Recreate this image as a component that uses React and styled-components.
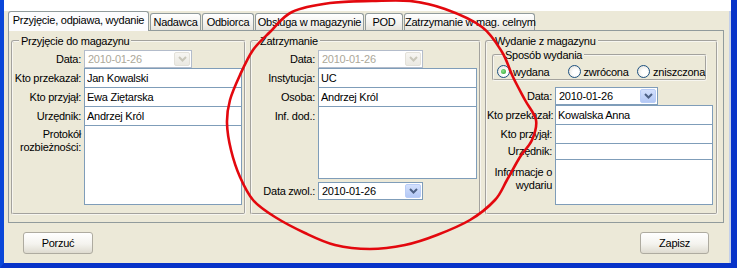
import React from 'react';
import styled, { createGlobalStyle } from 'styled-components';

const GlobalStyle = createGlobalStyle`
  html, body {
    margin: 0;
    padding: 0;
    background: #fff;
  }
  * {
    box-sizing: border-box;
  }
`;

const Window = styled.div`
  position: relative;
  width: 737px;
  height: 268px;
  display: flex;
  flex-direction: column;
  background: #ece9d8;
  border-left: 4px solid #0a47d9;
  border-right: 6px solid #0733c8;
  border-bottom: 5px solid #0733c8;
  box-shadow: inset -2px 0 0 #c3cfe9;
  font-family: 'Liberation Sans', Arial, sans-serif;
  font-size: 11px;
  letter-spacing: -0.25px;
  color: #000;
  overflow: hidden;
`;

const TopStrip = styled.div`
  height: 11px;
  background: #fff;
  flex: none;
`;

const TabRow = styled.div`
  height: 19px;
  display: flex;
  align-items: flex-end;
  gap: 1px;
  padding-left: 4px;
  flex: none;
`;

const Tab = styled.div`
  position: relative;
  z-index: ${(p) => (p.$active ? 2 : 0)};
  width: ${(p) => p.$w}px;
  height: ${(p) => (p.$active ? 20 : 17)}px;
  margin-bottom: ${(p) => (p.$active ? -1 : 0)}px;
  border: 1px solid #919b9c;
  border-bottom: none;
  border-radius: 3px 3px 0 0;
  background: ${(p) =>
    p.$active ? '#fcfcfe' : 'linear-gradient(#ffffff, #f3f2ee 60%, #e6e4dc)'};
  text-align: center;
  line-height: ${(p) => (p.$active ? 17 : 17)}px;
  white-space: nowrap;
`;

const Panel = styled.div`
  margin-left: 4px;
  width: 716px;
  height: 193px;
  flex: none;
  display: flex;
  gap: 4px;
  padding: 3px 5px 7px 2px;
  border: 1px solid #919b9c;
  background: #ece9d8;
`;

const Group = styled.fieldset`
  width: ${(p) => p.$w}px;
  min-width: 0;
  margin: 0;
  padding: 2px ${(p) => p.$pr}px 0 0;
  border: 2px groove #f7f6f0;
  border-radius: 3px;
`;

const SubGroup = styled(Group)`
  width: auto;
  margin: -2px 6px 0 5px;
  padding: 2px 0 0 3px;
`;

const Legend = styled.legend`
  margin-left: 6px;
  padding: 0 2px;
  line-height: 14px;
`;

const Row = styled.div`
  display: grid;
  grid-template-columns: ${(p) => p.$lw}px ${(p) => p.$fw}px;
  height: ${(p) => p.$h}px;
  margin-top: ${(p) => p.$mt ?? -1}px;
`;

const Label = styled.div`
  text-align: right;
  padding-right: 3px;
  line-height: 13px;
  white-space: nowrap;
  align-self: ${(p) => (p.$pt != null ? 'start' : 'center')};
  padding-top: ${(p) => p.$pt ?? 0}px;
`;

const TextBox = styled.input`
  width: 100%;
  height: 100%;
  margin: 0;
  padding: 0 2px;
  border: 1px solid #7f9db9;
  background: #fff;
  font: inherit;
  letter-spacing: inherit;
  color: #000;
  outline: none;
`;

const TextArea = styled.textarea`
  width: 100%;
  height: 100%;
  margin: 0;
  padding: 2px;
  border: 1px solid #7f9db9;
  background: #fff;
  font: inherit;
  letter-spacing: inherit;
  resize: none;
  outline: none;
  overflow: hidden;
`;

const Combo = styled.div`
  width: ${(p) => p.$w}px;
  height: 18px;
  display: flex;
  align-items: center;
  justify-content: space-between;
  padding: 0 1px 0 3px;
  border: 1px solid ${(p) => (p.$disabled ? '#b3bccb' : '#7f9db9')};
  background: #fff;
  color: ${(p) => (p.$disabled ? '#aca899' : '#000')};
`;

const DropButton = styled.div`
  width: 16px;
  height: 14px;
  display: flex;
  align-items: center;
  justify-content: center;
  border-radius: 2px;
  border: 1px solid ${(p) => (p.$disabled ? '#e3e1d9' : '#b9cdf7')};
  background: ${(p) =>
    p.$disabled
      ? 'linear-gradient(#f7f6f2, #ebe9e2)'
      : 'linear-gradient(#d3e0fd, #b3c8f5)'};
  color: ${(p) => (p.$disabled ? '#c9c7ba' : '#4d6185')};
`;

const RadioRow = styled.div`
  height: 15px;
  display: flex;
  align-items: center;
`;

const RadioItem = styled.label`
  width: ${(p) => (p.$w ? `${p.$w}px` : 'auto')};
  display: flex;
  align-items: center;
  gap: 3px;
`;

const RadioDot = styled.span`
  position: relative;
  width: 13px;
  height: 13px;
  border-radius: 50%;
  border: 1px solid #1c5180;
  background: radial-gradient(circle at 60% 60%, #ffffff 30%, #dcd9d0);
  &::after {
    content: '';
    display: ${(p) => (p.$checked ? 'block' : 'none')};
    position: absolute;
    left: 3px;
    top: 3px;
    width: 5px;
    height: 5px;
    border-radius: 50%;
    background: radial-gradient(circle at 40% 40%, #8fe28f, #21a121);
  }
`;

const Footer = styled.div`
  flex: 1;
  display: flex;
  justify-content: space-between;
  align-items: flex-start;
  padding: 9px 22px 0 19px;
`;

const Button = styled.button`
  width: ${(p) => p.$w}px;
  height: 22px;
  margin: 0;
  padding: 0;
  border: 1px solid #aeaba0;
  border-radius: 3px;
  background: linear-gradient(#ffffff, #f4f3ee 55%, #dedbd0);
  font: inherit;
  letter-spacing: inherit;
  color: #000;
`;

const Annotation = styled.svg`
  position: absolute;
  left: -4px;
  top: 0;
  pointer-events: none;
`;

function Chevron() {
  return (
    <svg width="9" height="6" viewBox="0 0 9 6">
      <path d="M1 1 L4.5 4.5 L8 1" fill="none" stroke="currentColor" strokeWidth="2" />
    </svg>
  );
}

function DateCombo({ w, disabled }) {
  return (
    <Combo $w={w} $disabled={disabled}>
      <span>2010-01-26</span>
      <DropButton $disabled={disabled}>
        <Chevron />
      </DropButton>
    </Combo>
  );
}

// hand drawn circle around the middle group
const loop = [
  [372, 1], [410, 1], [445, 9], [482, 27], [502, 52], [513, 77], [525, 100],
  [536, 120], [532, 140], [520, 157], [507, 180], [495, 200], [470, 220],
  [437, 235], [405, 245], [370, 249], [335, 245], [305, 233], [275, 217],
  [253, 200], [240, 177], [231, 150], [227, 123], [230, 100], [240, 75],
  [253, 50], [270, 32], [292, 12], [330, 3],
];

function smoothPath(pts) {
  const n = pts.length;
  let d = `M${pts[0][0]},${pts[0][1]}`;
  for (let i = 0; i < n; i++) {
    const p0 = pts[(i - 1 + n) % n];
    const p1 = pts[i];
    const p2 = pts[(i + 1) % n];
    const p3 = pts[(i + 2) % n];
    const c1x = p1[0] + (p2[0] - p0[0]) / 6;
    const c1y = p1[1] + (p2[1] - p0[1]) / 6;
    const c2x = p2[0] - (p3[0] - p1[0]) / 6;
    const c2y = p2[1] - (p3[1] - p1[1]) / 6;
    d += ` C${c1x.toFixed(1)},${c1y.toFixed(1)} ${c2x.toFixed(1)},${c2y.toFixed(1)} ${p2[0]},${p2[1]}`;
  }
  return d + ' Z';
}

export default function App() {
  return (
    <>
      <GlobalStyle />
      <Window>
        <TopStrip />
        <TabRow>
          <Tab $active $w={141}>Przyjęcie, odpiawa, wydanie</Tab>
          <Tab $w={51}>Nadawca</Tab>
          <Tab $w={52}>Odbiorca</Tab>
          <Tab $w={109}>Obsługa w magazynie</Tab>
          <Tab $w={38}>POD</Tab>
          <Tab $w={131}>Zatrzymanie w mag. celnym</Tab>
        </TabRow>

        <Panel>
          <Group $w={235} $pr={2}>
            <Legend>Przyjęcie do magazynu</Legend>
            <Row $lw={71} $fw={158} $h={18} $mt={0}>
              <Label>Data:</Label>
              <DateCombo w={108} disabled />
            </Row>
            <Row $lw={71} $fw={158} $h={20} $mt={0}>
              <Label>Kto przekazał:</Label>
              <TextBox defaultValue="Jan Kowalski" />
            </Row>
            <Row $lw={71} $fw={158} $h={20}>
              <Label>Kto przyjął:</Label>
              <TextBox defaultValue="Ewa Ziętarska" />
            </Row>
            <Row $lw={71} $fw={158} $h={20}>
              <Label>Urzędnik:</Label>
              <TextBox defaultValue="Andrzej Król" />
            </Row>
            <Row $lw={71} $fw={158} $h={80}>
              <Label $pt={3}>
                Protokół
                <br />
                rozbieżności:
              </Label>
              <TextArea />
            </Row>
          </Group>

          <Group $w={231} $pr={2}>
            <Legend>Zatrzymanie</Legend>
            <Row $lw={66} $fw={159} $h={18} $mt={0}>
              <Label>Data:</Label>
              <DateCombo w={105} disabled />
            </Row>
            <Row $lw={66} $fw={159} $h={20} $mt={0}>
              <Label>Instytucja:</Label>
              <TextBox defaultValue="UC" />
            </Row>
            <Row $lw={66} $fw={159} $h={20}>
              <Label>Osoba:</Label>
              <TextBox defaultValue="Andrzej Król" />
            </Row>
            <Row $lw={66} $fw={159} $h={73}>
              <Label $pt={4}>Inf. dod.:</Label>
              <TextArea />
            </Row>
            <Row $lw={66} $fw={159} $h={18} $mt={3}>
              <Label>Data zwol.:</Label>
              <DateCombo w={105} />
            </Row>
          </Group>

          <Group $w={233} $pr={3}>
            <Legend>Wydanie z magazynu</Legend>
            <SubGroup>
              <Legend>Sposób wydania</Legend>
              <RadioRow>
                <RadioItem $w={71}>
                  <RadioDot $checked />
                  wydana
                </RadioItem>
                <RadioItem $w={70}>
                  <RadioDot />
                  zwrócona
                </RadioItem>
                <RadioItem>
                  <RadioDot />
                  zniszczona
                </RadioItem>
              </RadioRow>
            </SubGroup>
            <Row $lw={68} $fw={158} $h={18} $mt={6}>
              <Label>Data:</Label>
              <DateCombo w={103} />
            </Row>
            <Row $lw={68} $fw={158} $h={20} $mt={0}>
              <Label>Kto przekazał:</Label>
              <TextBox defaultValue="Kowalska Anna" />
            </Row>
            <Row $lw={68} $fw={158} $h={20}>
              <Label>Kto przyjął:</Label>
              <TextBox />
            </Row>
            <Row $lw={68} $fw={158} $h={17}>
              <Label>Urzędnik:</Label>
              <TextBox />
            </Row>
            <Row $lw={68} $fw={158} $h={46}>
              <Label $pt={7}>
                Informacje o
                <br />
                wydariu
              </Label>
              <TextArea />
            </Row>
          </Group>
        </Panel>

        <Footer>
          <Button $w={70}>Porzuć</Button>
          <Button $w={69}>Zapisz</Button>
        </Footer>

        <Annotation width="737" height="268" viewBox="0 0 737 268">
          <path d={smoothPath(loop)} fill="none" stroke="#e3080e" strokeWidth="2.6" />
        </Annotation>
      </Window>
    </>
  );
}
